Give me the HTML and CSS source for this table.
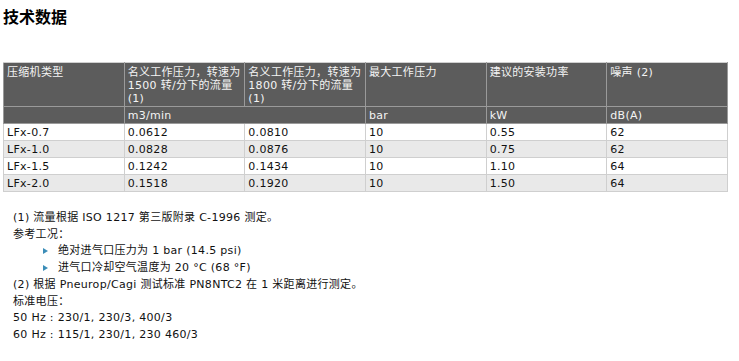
FILE: index.html
```html
<!DOCTYPE html>
<html lang="zh">
<head>
<meta charset="utf-8">
<link rel="stylesheet" href="styles.css">
</head>
<body>
<h2 class="title">技术数据</h2>
<table class="spec">
  <colgroup>
    <col class="c"><col class="c"><col class="c"><col class="c"><col class="c"><col class="c">
  </colgroup>
  <thead>
    <tr class="head">
      <th>压缩机类型</th>
      <th>名义工作压力，转速为 1500 转/分下的流量 (1)</th>
      <th>名义工作压力，转速为 1800 转/分下的流量 (1)</th>
      <th>最大工作压力</th>
      <th>建议的安装功率</th>
      <th>噪声 (2)</th>
    </tr>
    <tr class="units">
      <th></th>
      <th colspan="2">m3/min</th>
      <th>bar</th>
      <th>kW</th>
      <th>dB(A)</th>
    </tr>
  </thead>
  <tbody>
    <tr><td>LFx-0.7</td><td>0.0612</td><td>0.0810</td><td>10</td><td>0.55</td><td>62</td></tr>
    <tr class="alt"><td>LFx-1.0</td><td>0.0828</td><td>0.0876</td><td>10</td><td>0.75</td><td>62</td></tr>
    <tr><td>LFx-1.5</td><td>0.1242</td><td>0.1434</td><td>10</td><td>1.10</td><td>64</td></tr>
    <tr class="alt"><td>LFx-2.0</td><td>0.1518</td><td>0.1920</td><td>10</td><td>1.50</td><td>64</td></tr>
  </tbody>
</table>
<div class="notes">
  <p>(1) 流量根据 ISO 1217 第三版附录 C-1996 测定。</p>
  <p>参考工况：</p>
  <ul class="bullets">
    <li>绝对进气口压力为 1 bar (14.5 psi)</li>
    <li>进气口冷却空气温度为 20 °C (68 °F)</li>
  </ul>
  <p>(2) 根据 Pneurop/Cagi 测试标准 PN8NTC2 在 1 米距离进行测定。</p>
  <p>标准电压：</p>
  <p>50 Hz : 230/1, 230/3, 400/3</p>
  <p>60 Hz : 115/1, 230/1, 230 460/3</p>
</div>
</body>
</html>
```
FILE: styles.css
```css
html, body {
  margin: 0;
  padding: 0;
  background: #ffffff;
}
body {
  padding: 6px 3px;
  font-family: "DejaVu Sans", "Noto Sans CJK SC", sans-serif;
  font-size: 11px;
  color: #222222;
}
.title {
  margin: 0 0 36px 0;
  font-family: "Noto Sans CJK SC", sans-serif;
  font-size: 16px;
  font-weight: bold;
  line-height: 20px;
  color: #000000;
}
.spec {
  border-collapse: collapse;
  width: 725px;
  table-layout: fixed;
  font-size: 11px;
  line-height: 13px;
  letter-spacing: 0.3px;
}
.spec th, .spec td {
  border: 1px solid #cfcfcf;
  padding: 2px 3px 1px 3px;
  text-align: left;
  vertical-align: top;
  font-weight: normal;
}
.spec .head th {
  background: #5c5c5c;
  color: #f4f4f4;
  height: 34px;
  padding-top: 3px;
  border-color: #9a9a9a;
  border-top-color: #cfcfcf;
}
.spec .units th {
  background: #5c5c5c;
  color: #f4f4f4;
  border-color: #9a9a9a;
  border-top-color: #e0e0e0;
}
.spec td {
  color: #111111;
  height: 13px;
}
.spec .alt td {
  background: #e9e9e9;
}
.notes {
  margin-top: 18px;
  padding-left: 10px;
  color: #111111;
  font-size: 11px;
  line-height: 16.7px;
  letter-spacing: 0.3px;
}
.notes p {
  margin: 0;
}
.bullets {
  list-style: none;
  margin: 0;
  padding: 0 0 0 30px;
}
.bullets li {
  position: relative;
  padding-left: 15px;
}
.bullets li::before {
  content: "";
  position: absolute;
  left: 0;
  top: 5px;
  border-left: 5px solid #3b8db8;
  border-top: 3.5px solid transparent;
  border-bottom: 3.5px solid transparent;
}
```
